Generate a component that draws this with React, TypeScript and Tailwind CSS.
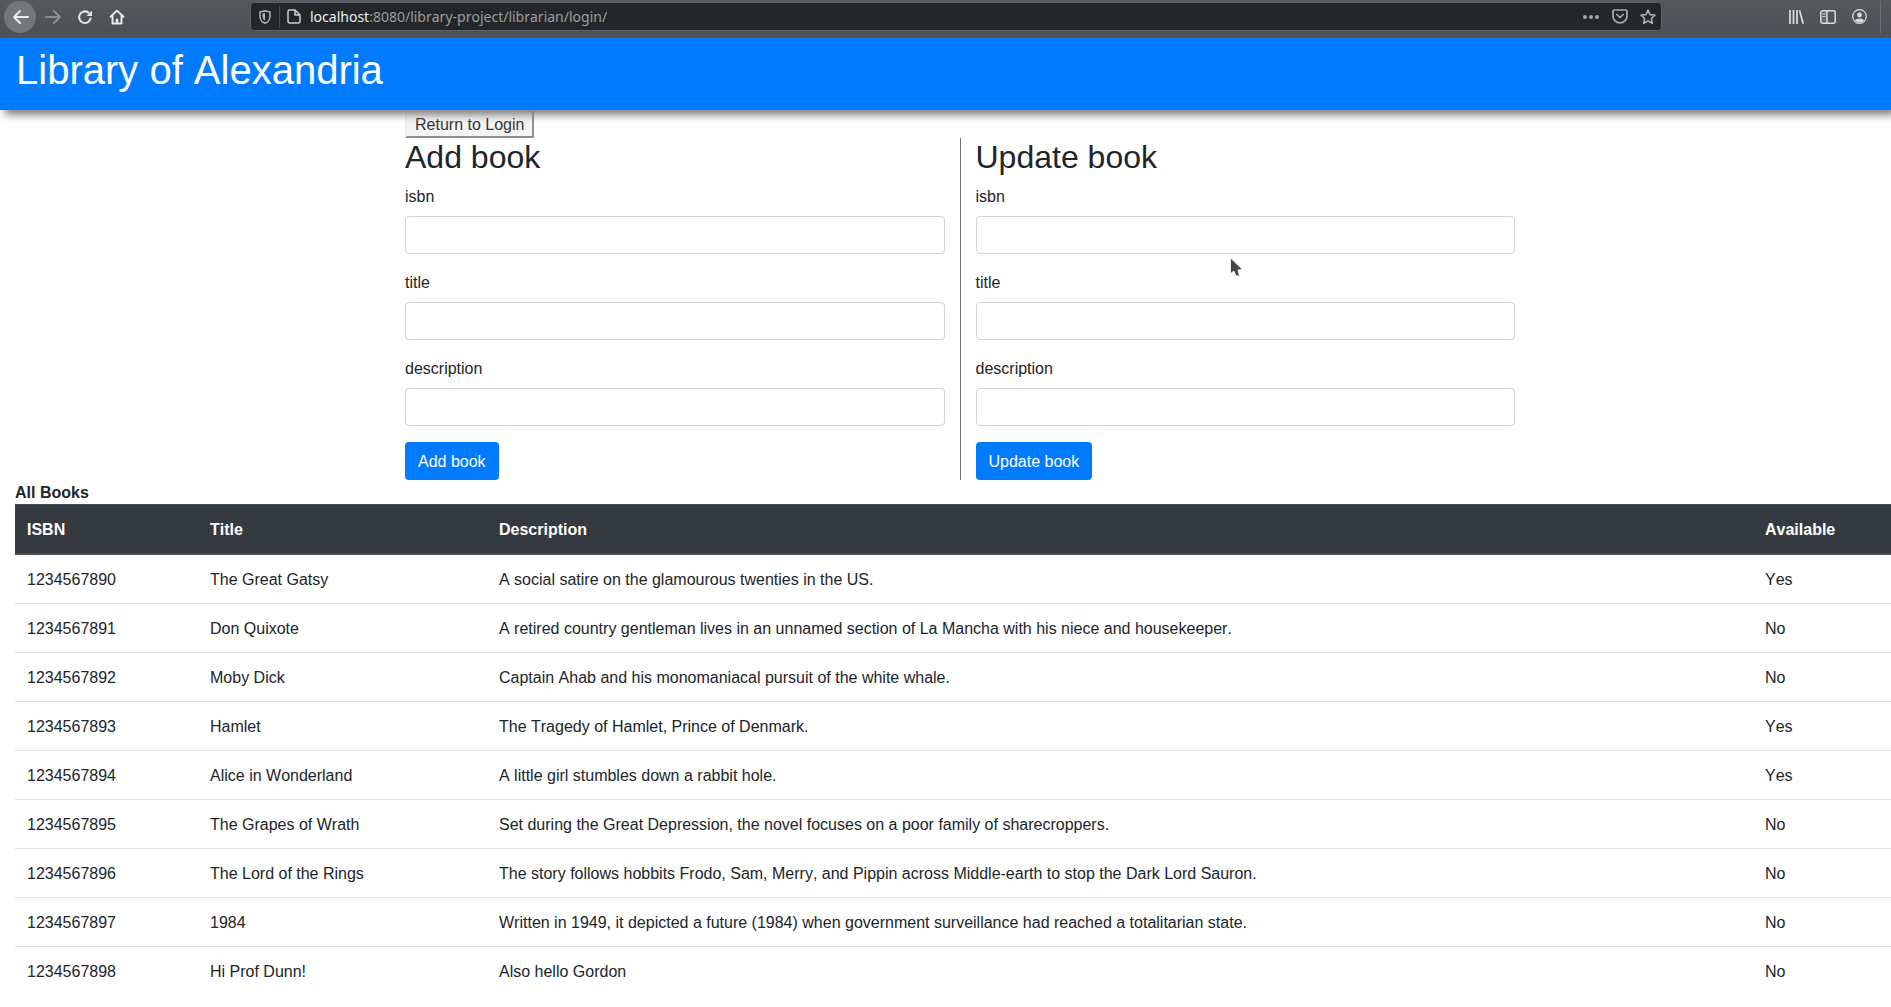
const books = [
  ['1234567890', 'The Great Gatsy', 'A social satire on the glamourous twenties in the US.', 'Yes'],
  ['1234567891', 'Don Quixote', 'A retired country gentleman lives in an unnamed section of La Mancha with his niece and housekeeper.', 'No'],
  ['1234567892', 'Moby Dick', 'Captain Ahab and his monomaniacal pursuit of the white whale.', 'No'],
  ['1234567893', 'Hamlet', 'The Tragedy of Hamlet, Prince of Denmark.', 'Yes'],
  ['1234567894', 'Alice in Wonderland', 'A little girl stumbles down a rabbit hole.', 'Yes'],
  ['1234567895', 'The Grapes of Wrath', 'Set during the Great Depression, the novel focuses on a poor family of sharecroppers.', 'No'],
  ['1234567896', 'The Lord of the Rings', 'The story follows hobbits Frodo, Sam, Merry, and Pippin across Middle-earth to stop the Dark Lord Sauron.', 'No'],
  ['1234567897', '1984', 'Written in 1949, it depicted a future (1984) when government surveillance had reached a totalitarian state.', 'No'],
  ['1234567898', 'Hi Prof Dunn!', 'Also hello Gordon', 'No'],
];

function BrowserBar() {
  return (
    <div className="flex h-[38px] items-center bg-linear-to-b from-[#55585c] to-[#4c4f53] pb-[5px] font-['Noto_Sans',sans-serif]">
      <div className="ml-1 flex h-8 w-8 items-center justify-center rounded-full bg-[#75787b]">
        <svg width="17" height="16" viewBox="0 0 17 16" fill="none" stroke="#ececec" strokeWidth="2" strokeLinecap="round" strokeLinejoin="round">
          <path d="M16 8H2M8 2L2 8l6 6" />
        </svg>
      </div>
      <svg width="17" height="16" viewBox="0 0 17 16" fill="none" stroke="#8b8d90" strokeWidth="2" strokeLinecap="round" strokeLinejoin="round" className="ml-[9px]">
        <path d="M1 8h14M9 2l6 6-6 6" />
      </svg>
      <svg width="16" height="16" viewBox="0 0 16 16" fill="none" className="ml-[15px]">
        <path d="M13.6 9.5A5.8 5.8 0 1 1 11.5 3.6" stroke="#e6e6e6" strokeWidth="2" strokeLinecap="round" />
        <path d="M15 1.5v5.5H9.5z" fill="#e6e6e6" />
      </svg>
      <svg width="16" height="16" viewBox="0 0 16 16" fill="none" stroke="#ececec" strokeWidth="1.9" strokeLinejoin="round" className="ml-[16px]">
        <path d="M1 8.2L8 1.6l7 6.6M3.5 6.5v8h9v-8" />
        <path d="M7 10h2v4.5H7z" fill="#ececec" strokeWidth="0.5" />
      </svg>
      <div className="ml-[125px] flex h-[29px] w-[1412px] items-center rounded border border-[#5e6165] bg-[#23272a] pr-[5px]">
        <svg width="12" height="14" viewBox="0 0 12 14" fill="none" className="ml-[8px]">
          <path d="M1 2l5-1.2L11 2v4.5c0 3.500-3 6-5 6.700C4 12.500 1 10 1 6.500z" stroke="#b4b5b6" strokeWidth="1.500" />
          <path d="M3.500 3.600L6 3v7.700C4.800 10 3.500 8.500 3.500 6.500z" fill="#b4b5b6" />
        </svg>
        <div className="ml-[8px] h-[22px] w-px bg-[#4a4d50]" />
        <svg width="14" height="15" viewBox="0 0 14 15" fill="none" stroke="#cfd0d0" strokeWidth="1.500" strokeLinejoin="round" className="ml-[7px]">
          <path d="M1 2.500A1.500 1.500 0 0 1 2.500 1H8l5 5v6.500a1.500 1.500 0 0 1-1.500 1.500h-9A1.500 1.500 0 0 1 1 12.500z" />
          <path d="M8 1v5h5" />
        </svg>
        <div className="ml-[9px] text-[14px] text-[#9c9ea0]">
          <span className="text-[#eceded]">localhost</span>:8080/library-project/librarian/login/
        </div>
        <div className="flex-1" />
        <svg width="16" height="4" viewBox="0 0 16 4" fill="#a4a5a6">
          <circle cx="2" cy="2" r="2" />
          <circle cx="8" cy="2" r="2" />
          <circle cx="14" cy="2" r="2" />
        </svg>
        <svg width="16" height="15" viewBox="0 0 16 15" fill="none" stroke="#a9aaab" strokeWidth="1.700" strokeLinecap="round" strokeLinejoin="round" className="ml-[13px]">
          <path d="M1 2.200C1 1.500 1.500 1 2.200 1h11.600c.7 0 1.200.5 1.200 1.200V7A7 7 0 0 1 1 7z" />
          <path d="M4.800 5.500L8 8.500l3.200-3" />
        </svg>
        <svg width="16" height="16" viewBox="0 0 16 16" fill="none" stroke="#a9aaab" strokeWidth="1.700" strokeLinejoin="round" className="ml-[12px]">
          <path d="M8 1.200l2.100 4.400 4.800.6-3.500 3.300.9 4.800L8 12l-4.300 2.300.9-4.800L1.100 6.200l4.800-.6z" />
        </svg>
      </div>
      <svg width="15" height="14" viewBox="0 0 15 14" fill="none" stroke="#dcdcdc" strokeWidth="1.700" className="ml-[127px]">
        <path d="M1 0v14M4.500 0v14M8 0v14M10.500 0.200l3.700 13.600" />
      </svg>
      <svg width="16" height="14" viewBox="0 0 16 14" fill="none" stroke="#dcdcdc" strokeWidth="1.500" className="ml-4">
        <rect x="0.800" y="0.800" width="14.400" height="12.400" rx="2" />
        <path d="M7 1v12" />
        <path d="M2.500 4h3M2.500 6.500h3" strokeWidth="1.200" />
        <path d="M1.500 1.500H7v11H1.500z" fill="#dcdcdc" fillOpacity="0.15" stroke="none" />
      </svg>
      <svg width="15" height="15" viewBox="0 0 15 15" fill="none" stroke="#dcdcdc" strokeWidth="1.200" className="ml-[16px]">
        <circle cx="7.500" cy="7.500" r="6.800" />
        <circle cx="7.500" cy="6" r="2.400" fill="#dcdcdc" stroke="none" />
        <path d="M3 11.500c1-2.700 8-2.700 9 0a6 6 0 0 1-9 0z" fill="#dcdcdc" stroke="none" />
      </svg>
      <div className="ml-[13px] h-[32px] w-px bg-[#6b6e72]" />
    </div>
  );
}

function BookForm({ title, action, divided }: { title: string; action: string; divided?: boolean }) {
  return (
    <div className={divided ? 'w-[556px] border-r border-[#6c757d] pr-[15px]' : 'w-[554px] pl-[14.5px]'}>
      <h2 className="mb-2 text-[32px] leading-[38.4px] font-medium text-[#212529]">{title}</h2>
      {['isbn', 'title', 'description'].map((name) => (
        <div key={name} className="mb-4">
          <label className="mb-[7px] block pt-px leading-6">{name}</label>
          <input className="block h-[38px] w-full rounded border border-[#ced4da] bg-white" />
        </div>
      ))}
      <button className="h-[38px] rounded bg-[#007bff] px-[13px] pt-px text-white">{action}</button>
    </div>
  );
}

export default function App() {
  return (
    <div className="relative h-[1007px] overflow-hidden bg-white font-['Liberation_Sans',sans-serif] text-[#212529] [font-kerning:none]">
      <BrowserBar />
      <header className="relative z-10 flex h-[72px] items-center bg-[#007bff] px-4 pb-[9px] shadow-[5px_5px_8px_#808080]">
        <h1 className="text-[40px] leading-[48px] font-medium text-white">Library of Alexandria</h1>
      </header>
      <div className="pl-[405px]">
        <button className="block h-7 border-2 border-t-[#efefef] border-r-[#8f8f8f] border-b-[#8f8f8f] border-l-[#efefef] bg-[#f5f4f4] px-2 pt-px leading-5 text-[#333]">
          Return to Login
        </button>
        <div className="flex">
          <BookForm title="Add book" action="Add book" divided />
          <BookForm title="Update book" action="Update book" />
        </div>
      </div>
      <div className="pl-[15px]">
        <div className="mt-[3px] h-[21px] leading-5 font-bold">All Books</div>
        <table className="w-full table-fixed border-separate border-spacing-0">
          <thead className="bg-[#343a40] text-white">
            <tr>
              <th className="w-[183px] border-t border-b-2 border-[#454d55] px-3 pt-[13px] pb-[11px] text-left leading-6">ISBN</th>
              <th className="w-[289px] border-t border-b-2 border-[#454d55] px-3 pt-[13px] pb-[11px] text-left leading-6">Title</th>
              <th className="border-t border-b-2 border-[#454d55] px-3 pt-[13px] pb-[11px] text-left leading-6">Description</th>
              <th className="w-[138px] border-t border-b-2 border-[#454d55] px-3 pt-[13px] pb-[11px] text-left leading-6">Available</th>
            </tr>
          </thead>
          <tbody>
            {books.map((book, row) => (
              <tr key={book[0]}>
                {book.map((cell, i) => (
                  <td
                    key={i}
                    className={row < books.length - 1 ? 'border-b border-[#dee2e6] px-3 pt-[13px] pb-[11px] leading-6' : 'px-3 pt-[13px] pb-[11px] leading-6'}
                  >
                    {cell}
                  </td>
                ))}
              </tr>
            ))}
          </tbody>
        </table>
      </div>
      {/* mouse pointer caught in the screenshot */}
      <svg width="14" height="21" viewBox="0 0 14 21" className="absolute top-[257px] left-[1229px]">
        <path d="M1.500 1L1.500 16.500L5 14L6.800 18.500L10.500 19.500L9 13L13.500 12.500Z" fill="#454545" stroke="#ffffff" strokeWidth="0.800" />
      </svg>
    </div>
  );
}
